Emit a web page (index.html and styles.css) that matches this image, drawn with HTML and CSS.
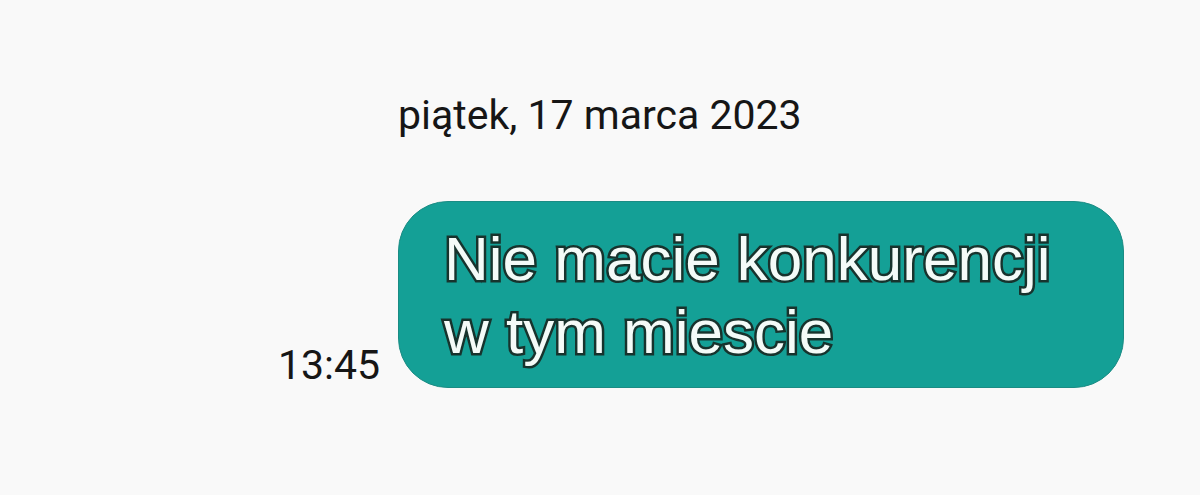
FILE: index.html
```html
<!DOCTYPE html>
<html lang="pl">
<head>
<meta charset="utf-8">
<link rel="stylesheet" href="styles.css">
</head>
<body>
<div class="chat">
  <div class="date">piątek, 17 marca 2023</div>
  <div class="time">13:45</div>
  <div class="bubble">Nie macie konkurencji<br>w tym miescie</div>
</div>
</body>
</html>
```
FILE: styles.css
```css
html, body {
  margin: 0;
  padding: 0;
  background: #f9f9f9;
}
.chat {
  display: grid;
  grid-template-columns: 398px 726px;
  grid-template-rows: auto auto;
  padding-top: 90px;
  row-gap: 61px;
}
.date {
  grid-column: 2;
  font-family: Roboto, "Liberation Sans", sans-serif;
  font-size: 41px;
  line-height: 50px;
  color: #161616;
}
.time {
  grid-column: 1;
  grid-row: 2;
  align-self: end;
  justify-self: end;
  padding-right: 18px;
  font-family: Roboto, "Liberation Sans", sans-serif;
  font-size: 41px;
  line-height: 46px;
  color: #161616;
}
.bubble {
  grid-column: 2;
  grid-row: 2;
  background: #14a096;
  border: 1px solid #1b8c84;
  border-radius: 50px;
  padding: 20px 40px 19px 45px;
  font-family: "Liberation Sans", Arial, sans-serif;
  font-size: 62px;
  line-height: 73px;
  color: #f4fbf8;
  -webkit-text-stroke: 5px #17332d;
  paint-order: stroke fill;
}
```
